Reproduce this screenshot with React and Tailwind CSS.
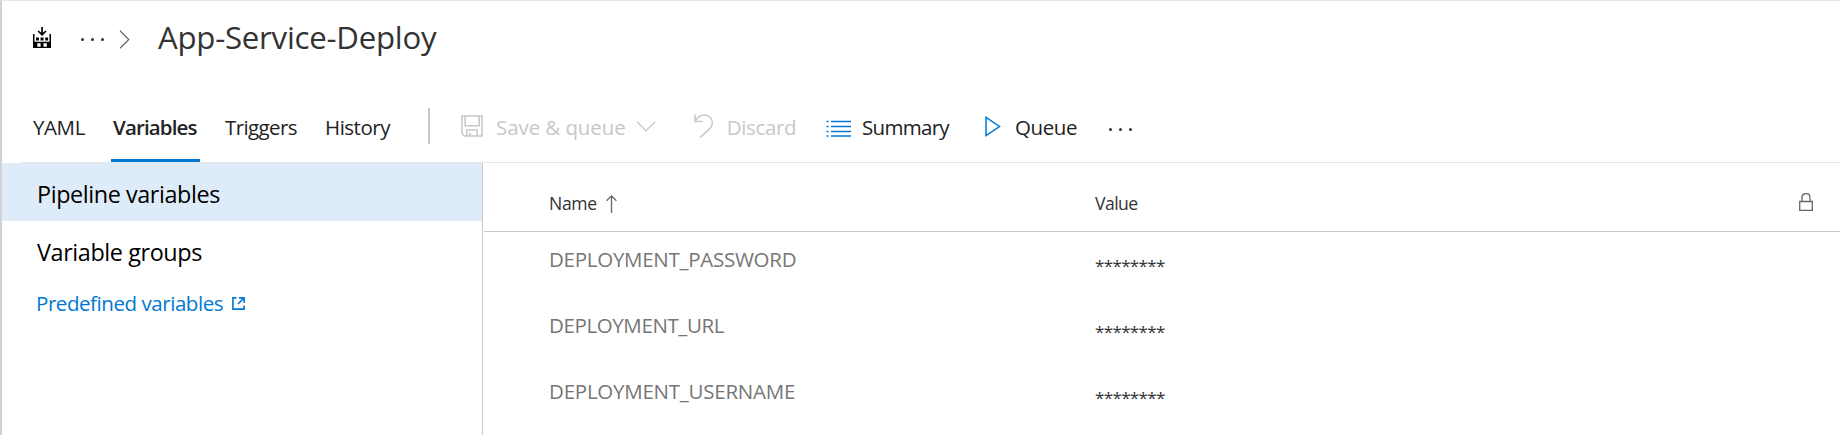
import React from "react";

const tabs = [
  { label: "YAML", box: "w-[80px]", text: "tracking-[-0.4px]" },
  { label: "Variables", box: "w-[112px]", text: "font-semibold tracking-[-0.87px]", active: true },
  { label: "Triggers", box: "w-[100px]", text: "tracking-[-0.6px]" },
  { label: "History", box: "w-[103px]", text: "tracking-[-0.48px]" },
];

const rows = [
  { name: "DEPLOYMENT_PASSWORD", text: "tracking-[-0.27px]" },
  { name: "DEPLOYMENT_URL", text: "tracking-[-0.39px]" },
  { name: "DEPLOYMENT_USERNAME", text: "tracking-[-0.24px]" },
];

function BuildIcon() {
  return (
    <svg className="ml-[31px] mt-[26px] h-[21px] w-[18px] shrink-0" viewBox="0 0 18 21" fill="#000">
      <path d="M8.200 0h1.700v5.800l2.600-2.400 1 1.200L9.050 9 4.600 4.600l1-1.200 2.600 2.400z" />
      <path d="M3 10.500h2.900v3H3zM7.600 10.500h2.900v3H7.600zM12.200 10.500h2.900v3h-2.900z" />
      <path fillRule="evenodd" d="M0 7h1.500v7.800h15V7H18v14H0zM4.300 16.300v3.400h3.300v-3.400zm6.200 0v3.400h3.300v-3.400z" />
    </svg>
  );
}

function Dots({ className }) {
  return (
    <span className={`flex gap-[7px] ${className}`}>
      <i className="size-[3px] rounded-full bg-[#333]" />
      <i className="size-[3px] rounded-full bg-[#333]" />
      <i className="size-[3px] rounded-full bg-[#333]" />
    </span>
  );
}

function SaveIcon() {
  return (
    <svg className="ml-[31px] h-[22px] w-[22px] shrink-0" viewBox="0 0 22 22" fill="none" stroke="#c8c8c8" strokeWidth="1.6">
      <path d="M1 1h20v20H3.500L1 18.500zM4.200 1v9.800h14V1M5.800 21v-6h10.400v6M9 21v-3.500" />
    </svg>
  );
}

export default function App() {
  return (
    <div className="flex h-[435px] w-[1840px] flex-col overflow-hidden border-l-2 border-t border-l-[#d2d2d2] border-t-[#e6e6e6] bg-white font-['Open_Sans',sans-serif] whitespace-nowrap">
      <header className="flex h-[72px] shrink-0">
        <BuildIcon />
        <Dots className="ml-[30px] mt-[37px]" />
        <svg className="ml-[15px] mt-[29px] h-[19px] w-[11px]" viewBox="0 0 11 19" fill="none" stroke="#666" strokeWidth="1.2">
          <path d="M1 .8l8.800 8.700L1 18.200" />
        </svg>
        <h1 className="ml-[28px] mt-[16px] text-[31.2px] leading-[40px] tracking-[-0.24px] text-[#333]">App-Service-Deploy</h1>
      </header>

      <div className="ml-[18px] flex h-[90px] shrink-0 border-b border-[#e6e6e6] pl-[13px] text-[20.5px] leading-[32px] text-[#222]">
        <nav className="flex pt-[38px]">
          {tabs.map((t) => (
            <div key={t.label} className={t.box}>
              <div className={t.text}>{t.label}</div>
              {t.active && <div className="-ml-[2px] mt-[16px] h-[3px] w-[89px] bg-[#0078d4]" />}
            </div>
          ))}
        </nav>
        <div className="mt-[35px] flex h-[36px] items-center self-start">
          <div className="h-[36px] w-[2px] bg-[#c8c8c8]" />
          <SaveIcon />
          <span className="ml-[13px] mt-[2px] tracking-[-0.08px] text-[#c8c8c8]">Save &amp; queue</span>
          <svg className="ml-[10px] h-[11px] w-[20px]" viewBox="0 0 20 11" fill="none" stroke="#c8c8c8" strokeWidth="1.3">
            <path d="M1 .8l9 9 9-9" />
          </svg>
          <svg className="ml-[38px] h-[24px] w-[20px]" viewBox="0 0 20 24" fill="none" stroke="#c8c8c8" strokeWidth="1.6">
            <path d="M1 .5v7h7.500M1.300 7.200C3.500 3.200 6.600 1 10.400 1c4.700 0 8 3.500 8 7.700 0 2.500-1 4.300-2.600 5.900L6.200 23.300" />
          </svg>
          <span className="ml-[13px] mt-[2px] tracking-[-0.37px] text-[#c8c8c8]">Discard</span>
          <svg className="ml-[30px] mt-[4px] h-[17px] w-[25px]" viewBox="0 0 25 17" fill="none" stroke="#0078d4" strokeWidth="1.5">
            <path d="M5 1.500h20M5 6.500h20M5 11.500h20M5 16h20M.5 1.500h2M.5 6.500h2M.5 11.500h2M.5 16h2" />
          </svg>
          <span className="ml-[11px] mt-[2px] tracking-[-0.72px]">Summary</span>
          <svg className="ml-[36px] h-[21px] w-[16px]" viewBox="0 0 16 21" fill="none" stroke="#0078d4" strokeWidth="1.5">
            <path d="M1 1.500v18L14.500 10.500z" />
          </svg>
          <span className="ml-[14px] mt-[2px] tracking-[-0.35px]">Queue</span>
          <Dots className="ml-[32px] mt-[6px]" />
        </div>
      </div>

      <div className="flex min-h-0 flex-1">
        <aside className="w-[481px] shrink-0 border-r border-[#c8c8c8] text-[23.4px] text-black">
          <div className="h-[58px] bg-[#deecf9] pl-[35px] pt-[2px] leading-[58px] tracking-[-0.42px]">Pipeline variables</div>
          <div className="h-[58px] pl-[35px] pt-[2px] leading-[58px] tracking-[-0.4px]">Variable groups</div>
          <a className="flex h-[48px] items-center pl-[34px] text-[20.5px] tracking-[-0.44px] text-[#0078d4]">
            Predefined variables
            <svg className="ml-[9px] size-[13px]" viewBox="0 0 13 13" fill="none" stroke="#0078d4" strokeWidth="1.6">
              <path d="M4.500 .9H.9v11.200h11.200V8.500M7 .9h5.100V6M12 1L6 7" />
            </svg>
          </a>
        </aside>
        <section className="ml-[1px] flex-1">
          <div className="flex h-[69px] border-b border-[#c8c8c8] pl-[65px] pt-[24px] text-[17.6px] leading-[32px] text-[#333]">
            <div className="flex w-[546px]">
              <span className="tracking-[-0.37px]">Name</span>
              <svg className="ml-[9px] mt-[8px] h-[18px] w-[11px]" viewBox="0 0 11 18" fill="none" stroke="#666" strokeWidth="1.3">
                <path d="M5.500 18V1M.6 5.800l4.900-4.900 4.900 4.900" />
              </svg>
            </div>
            <span className="w-[704px] tracking-[-0.57px]">Value</span>
            <svg className="mt-[6px] h-[18px] w-[14px]" viewBox="0 0 14 18" fill="none" stroke="#666" strokeWidth="1.3">
              <path d="M.7 8.500h12.600v8.800H.7zM3 8.500V4.500C3 2 4.700 .7 7 .7s4 1.300 4 3.800v4" />
            </svg>
          </div>
          {rows.map((r) => (
            <div key={r.name} className="flex h-[66px] pl-[65px] pt-[11px] leading-[32px]">
              <span className={`w-[546px] text-[20.5px] text-[#767676] ${r.text}`}>{r.name}</span>
              <span className="mt-[7px] text-[17px] font-medium tracking-[-0.65px] text-[#333]">********</span>
            </div>
          ))}
        </section>
      </div>
    </div>
  );
}
